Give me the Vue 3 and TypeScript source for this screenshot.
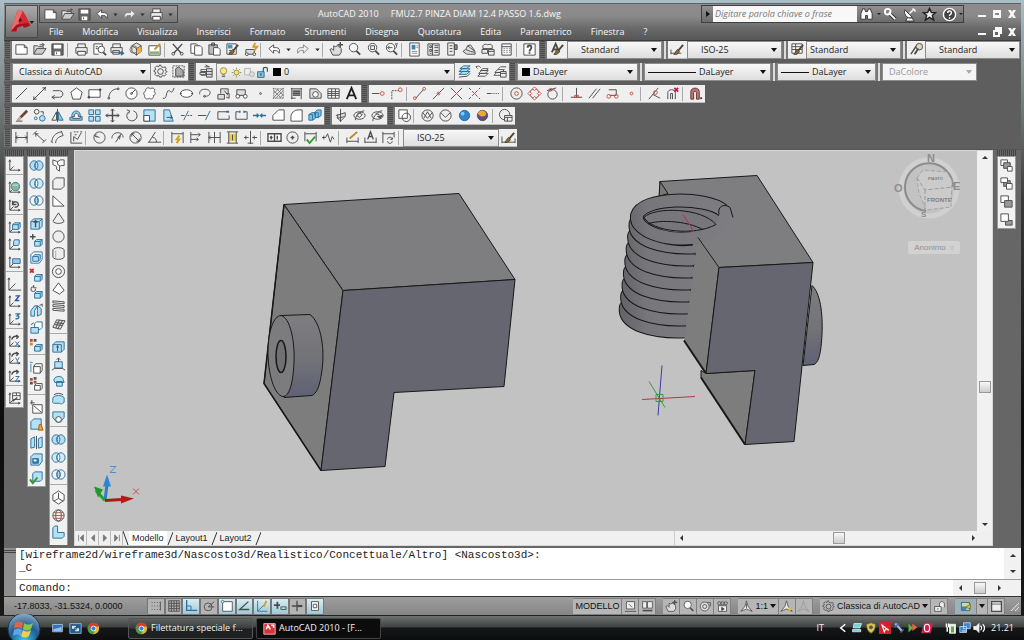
<script setup lang="ts">
import { ref } from 'vue'

type Item =
  | { kind: 'grip' }
  | { kind: 'light' }
  | { kind: 'bar'; width: number; icons: string[] }
  | {
      kind: 'combo'
      label: string
      width: number
      value: string
      pad: string
      swatch?: boolean
      line?: number
      disabled?: boolean
      layer?: boolean
    }

const B = 'stroke="#2a6f9e"'
const L = 'fill="#b5e2f2"'
const R = 'stroke="#c8503c"'
const G = 'stroke="#888"'
const axes = '<path d="M3 2v11h11M3 13l4-4M2 4l1-2 1 2M12 12l2 1-2 1"/>'
const cubeS = `<path ${B} ${L} d="M6 9l2-2h6v5l-2 2H6zM6 9h6v5M12 9l2-2"/>`
const dimH = '<path d="M2 2v12M14 2v12M2 8h12M4 6L2 8l2 2M12 6l2 2-2 2"/>'
const brush = '<path d="M14 3L9 9" stroke-width="2" stroke="#554433"/><path d="M8 8l2 2c-1 3-4 4-6 3 2-1 2-4 4-5z" fill="#8a6a34" stroke="#554433"/>'
const gear = '<path d="M8 1l1 2 2 .6L13 3l1 2-1 2 2 1-2 2 1 1-2 2-2-1-1 2H7l-1-2-2 1-2-2 1-2-2-1V7l2-1-1-2 2-2 2 1 1-2z"/><circle cx="8" cy="8" r="3"/>'
const lens = '<circle cx="7" cy="6" r="4.5" fill="#f8f8f8"/><path d="M10 9.500l4 4" stroke-width="2"/>'
const rings = (a: string, b: string) =>
  `<ellipse cx="5.500" cy="8" rx="4.500" ry="5" fill="${a}" ${B}/><ellipse cx="10.500" cy="8" rx="4.500" ry="5" fill="${a}" ${B}/><path d="M8 4c2 2 2 6 0 8-2-2-2-6 0-8z" fill="${b}" ${B}/>`

const icons: Record<string, string> = {
  nuovo: '<path fill="#fff" d="M2 3h9l3 3v7H2zM11 3v3h3"/>',
  apri: '<path fill="#ddd" d="M2 13V4h4l1 1h5v2"/><path fill="#ccc" d="M2 13l3-6h10l-4 6zM8 3h5l-2-2M13 3l-2 1"/>',
  salva: '<path fill="#666" d="M2 2h12v12H2z"/><path fill="#fff" stroke="none" d="M4 3h8v4H4zM5 10h6v4H5z"/><path d="M7 11v2"/>',
  stampa: '<path fill="#eee" d="M4 6V2h8v4M2 6h12v6h-2v-2H4v2H2z"/><path fill="#fff" d="M4 10h8v4H4z"/>',
  anteprima: '<path fill="#fff" d="M2 2h9v3M2 2v11h5M4 5h2M4 7h2"/><circle cx="10" cy="8" r="3.500" fill="#fff"/><path stroke-width="2" d="M12 11l3 3"/>',
  pubblica: `<path fill="#eee" d="M3 6V2h8v4M1 6h12v5H1zM3 9h7v4H3z"/><path d="M9 12h5M12 10l3 2-3 2z" ${B} fill="#2a7fc0"/>`,
  dwf: '<path fill="#e9e2c8" d="M3 4l5-3 5 3v6l-5 4-5-4zM3 4l5 3 5-3M8 7v7"/><circle cx="5" cy="8" r="4" fill="none" stroke="#777"/><path fill="#e6b43c" stroke="none" d="M9 7l4-2v5l-4 3z"/>',
  foglio: '<path fill="#fff" d="M2 4h12v10H2z"/><path fill="#8fb27a" stroke="none" d="M3 10h10v3H3z"/><path stroke="#c79327" stroke-width="2" d="M14 2L8 8"/>',
  taglia: '<path stroke-width="1.500" d="M3 2l9 10M13 2L4 12"/><circle cx="3.500" cy="12.500" r="1.500"/><circle cx="12.500" cy="12.500" r="1.500"/>',
  copia: '<path fill="#fff" d="M2 2h6l2 2v8H2z"/><path fill="#fff" d="M6 4h6l2 2v8H6z"/>',
  incolla: '<path fill="#bbb" d="M2 3h9v10H2zM5 1h3v3H5z"/><path fill="#fff" d="M7 6h5l2 2v6H7z"/>',
  proprieta: `<path fill="#fff" d="M2 2h10v11H2z"/><path fill="#4d93c7" stroke="none" d="M3 3h5v4H3z"/><path d="M4 9h3M4 11h3"/>${brush}`,
  blocco: '<path d="M2 8h9v5H2z" fill="#ddd"/><circle cx="3" cy="13" r="1.500" fill="#fff"/><circle cx="11" cy="13" r="1.500" fill="#fff"/><path stroke="#d99a2b" stroke-width="2" d="M12 1l-2 4h4l-3 4"/>',
  annulla: '<path fill="#fff" d="M2 7l5-4v3h3c3 0 4 3 3 6-1-2-2-3-4-3H7v3z"/>',
  ripeti: `<path fill="#eee" ${G} d="M14 7L9 3v3H6c-3 0-4 3-3 6 1-2 2-3 4-3h2v3z"/>`,
  giu: '<path fill="#333" stroke="none" d="M4 6h8l-4 5z"/>',
  pan: '<path fill="#ddd" d="M4 14L1 8l2-1 2 2V4l2 1 2-1 2 1 2 2v4l-2 3z"/><path d="M12 0v6M9 3h6" stroke-width="1.500"/>',
  zoom: lens,
  zoomf: `${lens}<path d="M5 4h4v4H5z"/>`,
  zoomp: `${lens}<path d="M12 2c2 1 2 4 0 5M12 2h3M9 6H4M6 4L4 6l2 2"/>`,
  tavola: `<path fill="#fff" d="M3 1h10v14H3z"/><path fill="#3c7fb0" stroke="none" d="M5 3h4v5H5z"/><path d="M10 4h2M10 6h2M5 10h6M5 12h6" ${G}/>`,
  centro: '<path fill="#eee" d="M2 2h12v12H2z"/><path stroke-width="1" d="M4 4h2v2H4zM9 4h4M9 6h4M4 8h2v2H4zM9 9h4M9 11h4M4 12h2M7 2v12"/>',
  tavolozze: '<path fill="#eee" d="M4 1h7v13H4z"/><path fill="#888" d="M11 3h3v5h-3zM6 4h3M6 7h3M6 10h3"/>',
  revisioni: '<path fill="#ddd" d="M1 10l3-2 5 2 5 1v2H5zM4 8l2-4 8 6M9 3l5 7M6 4l3-1"/>',
  markup: '<path fill="#eee" d="M2 4c1-2 4-2 5-1 2-1 4-1 5 1v3H2zM1 8h6v4H1zM8 8h6v6H8zM8 10h6"/>',
  calc: '<path fill="#f5f5f5" d="M3 2h10v12H3zM3 5h10"/><path d="M5 7h1M8 7h1M11 7h1M5 9h1M8 9h1M11 9h1M5 11h1M8 11h1M11 11h1"/>',
  guida: '<path fill="#fff" d="M2 2h12v12H2z"/><path stroke-width="2" d="M6 6c0-3 4-3 4-.5S8 8 8 10M8 11v1.500"/>',
  stileT: `<path stroke-width="2" d="M2 11L6 2l4 9M4 8h5"/>${brush}`,
  stileQ: `<path d="M1 8v5M1 12h11"/>${brush}`,
  stileTab: `<path fill="#fff" d="M2 2h11v10H2zM2 5h11M2 8h11M6 2v10"/>${brush}`,
  stileD: '<path d="M2 13L8 4" stroke-width="1.500"/><circle cx="11" cy="5" r="3.500" fill="#e5d7b8"/><path d="M6 13l4-6" stroke-width="2"/>',
  gear,
  area: '<path fill="#aaa" d="M5 5l3-2 5 4v6H5z"/><path stroke-dasharray="2 1" d="M2 2h12v12H2z"/>',
  layers: '<path fill="#fff" d="M2 6h6v2H2zM1 9h6v2H1zM2 12h6M6 3h5M7 1l4 2"/><path fill="#ddd" d="M8 5h6v9H8zM8 8h6M8 11h6"/>',
  lampada: '<circle cx="8" cy="6" r="4" fill="#fbe58a" stroke="#9a8446"/><path d="M6 11h4M6 13h4" stroke="#555"/>',
  sole: '<circle cx="8" cy="8" r="3" fill="#f6e27a" stroke="#8f8532"/><path stroke="#8f8532" d="M8 2v2M8 12v2M2 8h2M12 8h2M4 4l1 1M11 11l1 1M12 4l-1 1M4 12l1-1"/>',
  gela: `<path fill="#eee" stroke="#aaa" d="M2 3h7v8H2z"/><circle cx="11" cy="10" r="3" fill="#ddd" stroke="#aaa"/>`,
  aperto: `<path fill="#7fc4de" stroke="#2c5f78" d="M2 7h8v7H2z"/><path stroke="#2c5f78" stroke-width="1.500" d="M9 7V4c0-3 5-3 5 0v3M6 9v3"/>`,
  piani1: `<path ${B} ${L} d="M2 11l4-3h8l-4 3zM2 8l4-3h8l-4 3zM3 5l4-3h7l-4 3z"/><path d="M2 14l9-1 3-3"/>`,
  piani2: '<path fill="#fff" d="M3 13l3-3h8l-3 3zM4 10l3-3h7l-3 3zM6 7l2-2h6l-2 2zM6 4C5 2 3 2 1 3l2 2"/>',
  piani3: '<path fill="#fff" d="M1 12l3-3h7l-3 3zM2 9l3-3h7l-3 3zM5 6l3-3h6"/><path fill="#eee" d="M8 8h6v6H8zM8 10h6"/>',
  linea: '<path d="M2 14L14 2"/>',
  xlinea: '<path d="M1 15L15 1M11 2l3 0 0 3M2 11v3h3"/>',
  poli: '<path d="M3 5h7c5 0 5 7 0 7H2M5 10l-3 2 3 2"/>',
  poligono: '<path fill="#fff" d="M8 2l6 4.500L12 14H4L2 6.500z"/>',
  rett: '<path fill="#fff" d="M2 4h12v8H2z"/><circle cx="2" cy="12" r="1" fill="#555"/><circle cx="14" cy="4" r="1" fill="#555"/>',
  arco: '<path d="M3 13C3 7 7 3 13 3"/><circle cx="3" cy="13" r="1"/><circle cx="13" cy="3" r="1"/>',
  cerchio: '<circle cx="8" cy="8" r="6" fill="#fff"/><path d="M8 8l4-4"/><circle cx="8" cy="8" r="1"/>',
  nuvola: '<path fill="#fff" d="M4 5c-1-3 4-4 5-2 2-2 6 0 4 3 2 2 1 4-1 4 1 3-2 5-4 3-3 2-6 0-5-3-2-1-1-4 1-5z"/>',
  spline: '<path d="M2 13c5 2 3-8 6-8s3 5 6-3"/>',
  ellisse: '<ellipse cx="8" cy="8" rx="6.500" ry="4" fill="#fff"/><path d="M1 8h2M13 8h2"/>',
  arcoel: '<path d="M3 9c-2-7 11-7 11-2 0 4-5 4-6 4"/><circle cx="8" cy="11" r="1"/>',
  inserisci: '<path fill="#ddd" d="M2 9h7v5H2zM5 8V3h8v5h-2M9 5l3 4 2-1v5l-3-1"/>',
  crea: '<path fill="#ddd" d="M3 4h9v6H3z"/><circle cx="4" cy="11" r="2" fill="#fff"/><circle cx="12" cy="11" r="2" fill="#fff"/>',
  punto: '<circle cx="8" cy="8" r="1"/>',
  tratteggio: '<path stroke-dasharray="1 1" d="M2 3h12M2 13h12M3 2v12M13 2v12"/><path stroke="#777" d="M3 8l5-5M3 12l9-9M5 13l8-8M9 13l4-4M3 5l8 8M6 3l7 7"/>',
  gradiente: '<path fill="#888" stroke="none" d="M4 4h8v6H4z"/><path d="M2 3h12M3 2v12M13 2v12M2 13h5M4 6h8M4 8h8M4 10h8"/>',
  regione: '<path fill="#ddd" d="M2 13V3h7l5 5v5z"/><circle cx="8" cy="9" r="3" fill="#fff"/>',
  tabella: '<path fill="#fff" d="M2 3h12v10H2zM2 6h12M2 8h12M2 10h12M6 3v10M10 3v10"/>',
  testo: '<path stroke-width="2" stroke="#222" d="M3 14L8 2l5 12M5 10h6"/>',
  snap1: `<path d="M1 8h8"/><circle cx="12" cy="8" r="2" ${R}/>`,
  snap2: `<path stroke-dasharray="2 1" d="M3 14V5h7"/><circle cx="12" cy="4" r="2" ${R}/>`,
  snap3: `<path d="M4 13L12 4"/><circle cx="3" cy="13" r="1.500" ${R}/><circle cx="13" cy="3" r="1.500" ${R}/>`,
  snap4: `<path d="M2 14L14 2"/><circle cx="8" cy="8" r="1.500" ${R}/>`,
  snap5: `<path d="M2 2l12 12M2 14L14 2"/><path ${R} d="M6 6l4 4M6 10l4-4"/>`,
  snap6: `<path stroke-dasharray="3 2" d="M2 2l12 12M2 14L14 2"/><path ${R} d="M6 6l4 4M6 10l4-4"/>`,
  snap7: '<path d="M2 8h5M8 8h1M10 8h1M12 8h1M14 8h1"/>',
  snap8: `<circle cx="8" cy="8" r="6"/><circle cx="8" cy="8" r="2" ${R}/>`,
  snap9: `<circle cx="8" cy="8" r="5"/><path ${R} fill="#fff" d="M8 1l2 2-2 2-2-2zM8 11l2 2-2 2-2-2zM3 6l2 2-2 2-2-2zM13 6l2 2-2 2-2-2z"/>`,
  snap10: `<circle cx="8" cy="9" r="5"/><path d="M2 5l10-3"/><circle cx="6" cy="4" r="1.500" ${R}/>`,
  snap11: `<path d="M8 2v10M2 12h12"/><path ${R} d="M6 12v-2h4v2z"/>`,
  snap12: '<path d="M2 13L10 3M6 13l8-10"/>',
  snap13: `<path d="M4 4h8v6H5"/><circle cx="4" cy="11" r="2" ${R}/><circle cx="12" cy="11" r="2" ${R}/>`,
  snap14: `<circle cx="8" cy="8" r="1.500" ${R}/>`,
  snap15: `<path d="M2 14L12 2M6 9l8 4"/><circle cx="9" cy="7" r="2" ${R}/>`,
  snap16: '<path d="M3 14V7c0-4 8-4 8 0v7M6 14V8h2v6"/><path stroke="#c02040" stroke-width="2" d="M10 2l4 4M14 2l-4 4"/>',
  magnete: '<path fill="#b77" stroke="#633" d="M3 14V6c0-5 9-5 9 0v8H9V7c0-2-3-2-3 0v7z"/><path d="M13 13h2" stroke-width="2" stroke="#633"/>',
  cancella: '<path stroke-width="3" stroke="#6b4630" d="M14 3L7 10"/><path stroke-width="3" stroke="#d9a07a" d="M7 10l-3 3"/><path d="M2 14h7"/>',
  copiaO: `<circle cx="5" cy="4" r="2.500"/><circle cx="4" cy="11" r="1.500" ${B}/><circle cx="11" cy="11" r="3" ${B} ${L}/><path d="M9 4h3v3"/>`,
  specchio: `<path d="M7 4v9H2z"/><path ${B} fill="#8fcbe4" d="M9 4v9h5z"/><path d="M8 1v14"/>`,
  offset: `<path ${B} fill="#8fcbe4" d="M1 13v-3h2c-1-9 10-9 9-1h2v4z"/><path fill="#fff" d="M4 11V9h2c-1-4 4-4 4-1v1h2v2z"/>`,
  serie: `<path ${B} ${L} d="M2 2h5v5H2zM9 2h5v5H9zM2 9h5v5H2zM9 9h5v5H9z"/>`,
  sposta: '<path stroke-width="1.500" d="M8 1v14M1 8h14"/><path d="M6 3l2-2 2 2M6 13l2 2 2-2M3 6L1 8l2 2M13 6l2 2-2 2"/>',
  ruota: '<path d="M10 3a5.500 5.500 0 1 1-5 1M3 2l3 1-1 3"/>',
  scala: `<path ${B} ${L} d="M2 2h12v12H2z"/><path fill="#fff" d="M2 8h6v6H2z"/>`,
  stira: `<path ${B} ${L} d="M3 2h6l4 12H3z"/><path d="M6 10h6M10 8l2 2-2 2"/>`,
  taglia2: `<path d="M2 8h4"/><path ${B} d="M5 13L10 3"/><path stroke-dasharray="2 1" d="M9 8h6"/>`,
  estendi: `<path d="M1 8h9"/><path ${B} d="M9 13L14 3"/>`,
  spezza1: `<path d="M12 4H2v8h12V8"/><path ${B} stroke-width="2" d="M11 4h3"/>`,
  spezza2: `<path d="M5 4H2v8h12V4h-3"/><path ${B} stroke-width="2" d="M5 4h2M10 4h2"/>`,
  unisci: `<path ${B} stroke-width="1.500" d="M1 8h5M10 8h5M5 6l2 2-2 2M11 6L9 8l2 2"/>`,
  cima: '<path fill="#fff" d="M2 13V8l6-6h6v11z"/>',
  raccordo: '<path fill="#fff" d="M2 14V10c0-5 4-8 8-8h4v12z"/>',
  esplodi: `<path ${B} fill="#7fc4de" d="M2 7l3-2h4v6l-3 2H2zM8 5l3-3h4v6l-3 2H9zM2 7h4v6M8 5h4v6"/>`,
  orbita1: '<path fill="#ddd" d="M2 8l10-3M4 7v4l8-2V5"/><path d="M7 1v14M3 10l4 4 4-4"/>',
  orbita2: '<ellipse cx="8" cy="8" rx="6" ry="4"/><path d="M4 13c-2-4 6-10 9-10M7 5l4 2-3 3-3-2z"/>',
  orbita3: '<ellipse cx="8" cy="8" rx="6" ry="4"/><path fill="#555" d="M8 9l5-1-2 3z"/><path d="M3 14c0-5 6-11 10-11M6 6l4 1"/>',
  stile1: '<path fill="#fff" d="M2 2h9v9H2z"/><circle cx="10" cy="10" r="4.500" />',
  stile2: '<circle cx="8" cy="8" r="6"/><path d="M3 5l5 6 5-6M4 11l4-7 4 7"/>',
  stile3: '<circle cx="8" cy="8" r="6"/><path d="M3 5l5 5 5-5"/>',
  stile4: '<circle cx="8" cy="8" r="5.500" fill="#2f86d0" stroke="#286ca8"/><circle cx="6" cy="6" r="2" fill="#8cc8f2" stroke="none"/>',
  stile5: '<circle cx="8" cy="8" r="5.500" fill="#5b4a92" stroke="#64533d"/><path fill="#e9a63a" stroke="none" d="M3 6c2-5 9-4 9 1-2 3-6 3-9-1z"/>',
  stile6: '<circle cx="7" cy="7" r="5.500"/><path fill="#eee" d="M7 8h8v6H7zM7 10h8M10 10v4"/>',
  quota1: dimH,
  quota2: '<path d="M3 3l10 9M1 5l4-4M11 14l4-4M4 4v3M4 4h3"/>',
  quota3: '<path d="M2 13C2 7 6 3 12 2M6 14c0-4 3-7 8-8M1 12l2 2M12 1l2 5"/>',
  quota4: '<path d="M2 2v12h12M5 12V7l4 3 4-7M5 2h2M8 2h2M12 2h2M6 5h2"/>',
  quota5: '<circle cx="8" cy="8" r="6"/><path d="M3 6l5 2M5 4L3 6l2 2"/>',
  quota6: '<path d="M2 9c0-8 12-8 12-1M12 4l-6 9M10 10l1-4-3 2"/>',
  quota7: '<circle cx="8" cy="8" r="6"/><path d="M4 4l8 8M4 7V4h3M12 9v3H9"/>',
  quota8: '<path d="M1 13h14M2 13L9 2M6 8c3 0 4 2 4 5"/>',
  quota9: '<path d="M2 2v12M14 2v12M2 4h12"/><path stroke="#d5a21c" stroke-width="2" d="M10 6l-3 4h3l-3 4"/>',
  quota10: '<path d="M3 2v12M3 5h10M3 10h8M11 3l2 2-2 2M9 8l2 2-2 2"/>',
  quota11: '<path d="M2 2v12M8 2v12M14 2v12M2 8h12M4 6L2 8l2 2"/>',
  quota12: '<path fill="#e8d048" stroke="none" d="M4 4h8v8H4z"/><path d="M2 2h12M2 14h12M4 2v12M12 2v12M8 5v6"/>',
  quota13: '<path d="M1 8h5M10 8h5M8 1v14M3 6v4M12 6v4M5 14h6"/>',
  quota14: '<path fill="#fff" d="M1 4h14v8H1zM8 4v8M3 8h3M4.500 6v4M11 6v4" stroke-width="1.500"/>',
  quota15: '<circle cx="8" cy="8" r="6"/><path stroke-width="1.500" d="M8 6v4M6 8h4"/>',
  quota16: '<path d="M2 2v10M14 2v10M2 4h12"/><path stroke="#3c9a34" stroke-width="2" d="M4 10l3 4 6-7"/>',
  quota17: '<path d="M1 8h4l2-4 3 9 2-6 2 3M3 6v4"/>',
  quota18: '<path d="M2 8v6M14 8v6M2 12h12"/><path stroke="#b98b28" stroke-width="2" d="M13 2L5 9"/>',
  quota19: '<path d="M2 8v6M14 8v6M2 13h12"/><path stroke-width="1.500" d="M5 10l3-8 3 8M6 7h4"/>',
  quota20: '<path d="M2 2v12M14 2v6M2 4h12M7 10c0-3 5-3 5 0M12 12c0 3-5 3-5 0M12 8v2h-2"/>',
  stileQ2: `<path d="M1 7v7M15 9v5M1 13h14"/>${brush}`,
  ucs: axes,
  ucsMondo: `${axes}<circle cx="9" cy="7" r="4.500" fill="#7fb8a8" stroke="#4f7f78"/><path stroke="#d8eee8" d="M6 6c2-2 4 1 6-1"/>`,
  ucsPrec: `${axes}<path stroke-width="1.500" d="M6 3v4h4M6 7c1-5 7-3 6 1-1 2-2 2-4 2"/>`,
  ucsFaccia: `${axes}<path ${B} ${L} d="M6 5l2-2h6v5l-2 2H6zM6 5h6v5M12 5l2-2"/>`,
  ucsOgg: `${axes}<path ${B} ${L} d="M7 5l1-2h5v4l-1 2H7z"/>`,
  ucsVista: `${axes}<path ${B} fill="#9ccbe8" d="M6 4h8v5H6z"/>`,
  ucsO: '<path d="M2 1v13h13M2 14l7-7M1 3l1-2 1 2"/>',
  ucsZ: `${axes}<path stroke="#3450b0" stroke-width="1.500" d="M9 2h4l-4 5h4"/>`,
  ucs3: `${axes}<path stroke="#3070a0" stroke-width="1.500" d="M9 2h4l-2 2c3 0 2 4-2 3"/>`,
  ucsRx: `${axes}<path stroke-width="1.500" d="M5 6c1-4 4-4 7-3M10 1l2 2-2 2"/><path ${B} d="M9 8l4 5M13 8l-4 5"/>`,
  ucsRy: `${axes}<path stroke-width="1.500" d="M5 6c1-4 4-4 7-3M10 1l2 2-2 2"/><path ${B} d="M9 7l2 3 2-3M11 10v3"/>`,
  ucsRz: `${axes}<path stroke-width="1.500" d="M5 6c1-4 4-4 7-3M10 1l2 2-2 2"/><path ${B} d="M9 8h4l-4 5h4"/>`,
  ucsApp: `${axes}<path fill="#fff" d="M6 2h8v7H6zM6 5h8M10 2v3"/><path stroke-width="1.500" d="M6 11l5-4"/>`,
  unione: rings('#b5dcf2', '#b5dcf2'),
  interseca: rings('none', '#b5dcf2'),
  sotU: rings('#d0ebf5', '#fff'),
  estrudi: `<path ${B} ${L} d="M2 6l3-3h9v8l-3 3H2zM2 6h9v8M11 6l3-3"/><path stroke-width="1.500" d="M7 12V5M5 7l2-2 2 2"/>`,
  spostaF: `${cubeS}<path stroke-width="1.500" d="M4 1v6M1 4h6"/>`,
  offsetF: `<path ${B} fill="#fff" d="M2 5l3-3h9v8l-3 4H2z"/><path ${B} ${L} d="M4 7h6v5H4zM4 7l2-2h6v5l-2 2"/>`,
  eliminaF: `${cubeS}<path stroke="#c03030" stroke-width="2" d="M1 1l4 4M5 1L1 5"/>`,
  ruotaF: `${cubeS}<path d="M5 2a2.500 2.500 0 1 0 2 2M5 0v3h3"/>`,
  rastrema: `<path ${B} ${L} d="M2 14V8l4-5h3l-3 5v6zM9 3l4 3v6l-4 2V8z"/><path d="M11 3l3-2v3"/>`,
  copiaF: `<path ${B} fill="#fff" d="M6 4l2-2h6v6l-2 2H6z"/><path ${B} ${L} d="M2 8h8v6H2z"/><path d="M2 5l3-2"/>`,
  coloraF: `${cubeS}<path stroke="none" fill="#a85238" d="M1 1h3v3H1z"/><path stroke="none" fill="#555" d="M5 1h3v3H5z"/><path stroke="none" fill="#c88a3c" d="M1 5h3v3H1z"/>`,
  copiaS: '<path fill="#fff" d="M5 7l2-3h7v7l-2 3H5zM5 7h7v7"/><path d="M2 4v9M1 2l3 1" stroke="#3c88b5"/>',
  coloraS: '<path fill="#fff" d="M6 9l2-2h6v5l-2 2H6zM6 9h6v5"/><path stroke="none" fill="#a85238" d="M1 1h3v3H1zM5 4h3v3H5z"/><path stroke="none" fill="#555" d="M5 0h3v3H5zM1 5h3v3H1z"/>',
  imprimi: '<path fill="#fff" d="M4 5h10v9H4z"/><path d="M5 6l8 7M3 0v5M1 3h5"/>',
  pulisci: `<path ${B} ${L} d="M2 5l3-3h8v8l-2 3H2z"/><path fill="#f0a030" stroke="#9a6418" d="M10 14l1-6h2l2 6z"/>`,
  separa: `<path ${B} ${L} d="M2 4l4-2v11l-4 1zM10 4l4-2v11l-4 1z"/><path d="M8 1v14" />`,
  svuota: `<path ${B} ${L} d="M2 5l3-3h9v8l-3 4H2z"/><path ${B} fill="#3a7ca5" d="M4 7h6v5H4z"/><path fill="#fff" stroke="none" d="M5 8h3v2H5z"/>`,
  controlla: `<path ${B} ${L} d="M4 4l2-2h8v8l-2 2H4z"/><path stroke="#3c9030" stroke-width="2" d="M1 10l3 4 5-6"/>`,
  polisol: '<path fill="#fff" d="M2 2l5 2v3l2 1v6l-3-2V9L2 7zM7 4l3-2h4v6h-3l-2 1"/>',
  cubo: '<path fill="#eee" d="M2 5l3-3h9v9l-3 3H2z"/>',
  cuneo: '<path fill="#fff" d="M2 14V3l12 11z"/>',
  cono: '<path fill="#eee" d="M8 2l6 9c-2 3-10 3-12 0z"/>',
  sfera: '<circle cx="8" cy="8" r="6" fill="#eee"/>',
  cilindro: '<path fill="#eee" d="M2 4c2-3 10-3 12 0v8c-2 3-10 3-12 0z"/><path d="M5 5v8" stroke="#aaa"/>',
  toro: '<circle cx="8" cy="8" r="6.500"/><circle cx="8" cy="8" r="3" fill="#fff"/>',
  piramide: '<path fill="#fff" d="M8 2l6 8-5 4-7-4z"/>',
  elica: '<path fill="#fff" d="M2 2l12 1v2L2 4zM2 6l12 1v2L2 8zM2 10l12 1v2L2 12z"/>',
  superf: '<path fill="#ddd" d="M6 3l9 1-5 9-8-2zM5 6l8 1M4 8l8 1M9 3l-4 9M12 4l-5 9"/>',
  estr2: `<path ${B} ${L} d="M2 6l3-3h9v8l-3 3H2zM2 6h9v8"/><path d="M7 13V7M6 9l1-2 1 2"/>`,
  premi: `<path ${B} ${L} d="M4 5h8v7H4z"/><path d="M8 1v4M6 3l2-2 2 2M1 14l3-2M15 14l-3-2M4 12h8"/>`,
  sweep: `<path ${B} ${L} d="M3 6c2-5 10-4 10 0l1 3H4zM6 8h6v5H6z"/>`,
  rivol: `<path ${B} ${L} d="M2 6c3-3 9-3 12 0v5c-2 2-4 2-5 1H4c-2 0-3-1-2-3z"/><path d="M3 3c3-2 7-2 10 0"/>`,
  loft: `<path ${B} ${L} d="M2 2h12v6l-4 5H6L2 8z"/><circle cx="8" cy="10" r="3" fill="#fff"/>`,
  ucs3d: '<path fill="#fff" d="M8 1l6 4v6l-6 4-6-4V5zM8 3v6M8 9l5 3M8 9l-5 3"/>',
  globo: '<circle cx="8" cy="8" r="6"/><ellipse cx="8" cy="8" rx="3" ry="6"/><path d="M2 8h12M3 5h10M3 11h10" stroke="#a06050"/>',
  piano: `<path ${B} ${L} d="M2 3l2-2h3v7h7v4l-2 2H2z"/>`,
  ord1: '<path fill="#fff" d="M2 2h7v6H2z"/><path fill="#999" d="M5 5h7v6H5z"/><path fill="#fff" d="M9 9h5v5H9z"/>',
  ord2: '<path fill="#999" d="M5 5h7v6H5z"/><path fill="#fff" d="M2 2h7v5H2zM8 8h6v6H8z"/>',
  ord3: '<path fill="#fff" d="M2 2h8v7H2z"/><path fill="#999" d="M6 7h8v7H6z"/>',
  ord4: '<path fill="#999" d="M7 9h7v5H7z"/><path fill="#fff" d="M2 2h8v8H2z"/>',
  griglia1: '<path stroke-dasharray="1 2" d="M3 4h10M3 8h10M3 12h10"/><path d="M13 3v10"/>',
  griglia2: '<path d="M2 2h12v12H2zM5 2v12M8 2v12M11 2v12M2 5h12M2 8h12M2 11h12"/>',
  orto: `<path ${B} stroke-width="1.500" d="M3 1v12h12"/><path ${B} d="M3 8h5v5"/>`,
  polare: '<circle cx="7" cy="9" r="4.500"/><path d="M7 9h7M7 9l7-6"/>',
  osnap: `<path fill="#fff" d="M3 3h11v11H3z"/><circle cx="3" cy="3" r="1.500" fill="#fff" ${B}/>`,
  otrack: '<path stroke-width="1.500" d="M13 3L3 12h11"/>',
  ducs: `<path ${B} d="M3 2v12h11M3 14L13 4"/><path stroke="#d5a21c" stroke-width="2" d="M13 2l-3 7"/>`,
  dyn: '<path stroke-width="2" d="M1 7h7M5 3v8"/><path d="M9 9h6v3H9z"/>',
  lwt: '<path stroke-width="1.500" d="M8 2v12M2 8h12"/><path stroke-width="2.500" d="M8 8h6"/>',
  qp: '<path fill="#fff" d="M4 3h8v10H4z"/><path d="M6 6h4v4H6z"/>',
  lay1: '<path fill="#eee" d="M3 2h10v9H3zM1 14h14M6 5l4 4"/>',
  lay2: '<path fill="#eee" d="M2 2h5v8H2zM8 2h6v8H8z"/><path stroke-width="2" d="M2 13h12"/>',
  ruotino: '<circle cx="7" cy="8" r="5.500" fill="#ddd"/><circle cx="7" cy="8" r="2.500"/><path d="M10 3h4v5"/>',
  film: '<path fill="#eee" d="M3 7h10v7H3z"/><circle cx="4" cy="4" r="2"/><circle cx="8" cy="4" r="2"/><circle cx="12" cy="4" r="2"/><path fill="#333" d="M7 9l3 2-3 2z"/>',
  annot: '<path fill="#eee" d="M8 1l2 7 5 6-7-3-7 3 5-6zM8 4v6"/>',
  annotG: '<path fill="#eee" d="M8 1l2 7 5 6-7-3-7 3 5-6z"/><path stroke="#e0c030" stroke-width="3" d="M12 9v4"/>',
  annotD: '<path stroke="#999" d="M8 1l2 7 5 6-7-3-7 3 5-6z"/>',
  lucchetto: '<path fill="#eee" d="M2 8h8v6H2zM8 8V5c0-4 6-4 6 0v4M6 10v2"/>',
  hw: '<path fill="#bfe0a8" d="M3 3h10v10H3z"/><path fill="#3c7fc0" stroke="none" d="M3 8h6v5H3z"/><path fill="#e0c040" stroke="#7a6a20" d="M8 9l6-4v6z"/>',
  pulito: '<path fill="#eee" stroke-width="1.500" d="M2 2h12v12H2z"/><path d="M2 5h12"/>',
  binocolo: '<path fill="#fff" stroke="#333" d="M2 13V7l2-5h2l1 3h2l1-3h2l2 5v6H9V9H7v4z"/>',
  chiave: '<path stroke="#333" stroke-width="4" d="M7 7l6 6"/><path stroke="#fff" stroke-width="2" d="M6 6l7 7"/><circle cx="5" cy="5" r="3" stroke="#fff" stroke-width="2"/>',
  antenna: '<path fill="#fff" stroke="#333" d="M3 3l8 8c-3 3-10-2-8-8zM6 11l-2 4h9l-3-4"/><path stroke="#fff" stroke-width="1.500" d="M8 7l4-4M11 2c2 0 3 1 3 3"/>',
  stella: '<path fill="#eee" stroke="#222" stroke-width="1.500" d="M8 1.500l2 4.500h4.500L11 9l1.500 5L8 11l-4.500 3L5 9 1.500 6H6z"/>',
  aiuto: '<circle cx="8" cy="8" r="6.500" fill="#444" stroke="#fff" stroke-width="1.500"/><path stroke="#fff" stroke-width="1.500" d="M6 6.500c0-3 4-3 4-.5S8 7.500 8 9.500M8 11v1.500"/>',
  desktop: '<path fill="#2d74c4" stroke="#bcd" d="M2 3h12v9H2z"/><path fill="#8fc0ee" stroke="none" d="M3 9l10-3v5H3z"/>',
  finestre: '<path fill="#235a94" stroke="#9cc" d="M1 2h14v12H1z"/><path fill="#cfe6f8" stroke="#246" d="M3 4h6v5H3zM7 7h6v5H7z"/>',
  chrome: '<circle cx="8" cy="8" r="7" fill="#e0b52c" stroke="none"/><path fill="#cf3b2c" stroke="none" d="M2 4a7 7 0 0 1 12.500 1.500H8L5 10z"/><path fill="#3f9b48" stroke="none" d="M2 4a7 7 0 0 0 5.500 11L10 10H6z"/><circle cx="8" cy="8" r="3" fill="#3b7de0" stroke="#fff"/>',
  acad: '<path fill="#d8323a" stroke="#f4d0d0" d="M1 2h14v13H1z"/><path stroke="#fff" stroke-width="2" d="M4 9l2-5 3 5M10 4h3v3"/>',
  t1: '<path fill="#7fd0d8" stroke="#def" d="M4 2h10l-2 6H3zM2 10h11v3H2z"/>',
  t2: '<path fill="#d8c25a" stroke="#6a6020" d="M2 3l6-2 6 2c0 6-2 10-6 12C4 13 2 9 2 3z"/><circle cx="8" cy="7" r="2" fill="#555"/>',
  t3: '<path fill="#d4222c" stroke="none" d="M0 0h16v16H0z"/><path stroke="#fff" stroke-width="1.500" d="M4 4l3 9 2-4 4 2z"/>',
  t4: '<path stroke="#9fb6d8" stroke-width="3" d="M3 2l9 10"/><path stroke="#4b6fa8" stroke-width="2" d="M2 7l6-5M10 14l4-4"/>',
  t5: '<path fill="#5fb04a" stroke="none" d="M2 2l6 6-6 6z"/><path fill="#e06a38" stroke="none" d="M7 2l7 5-7 5z"/>',
  t6: '<path fill="#d0224c" stroke="none" d="M4 1h12l-3 14H0z"/><ellipse cx="8" cy="8" rx="3.500" ry="5" stroke="#fff" stroke-width="1.500"/>',
  t7: '<path fill="#e8f0e4" stroke="#fff" d="M6 3h8v12H6z"/><path fill="#5fa84c" stroke="none" d="M8 6h4v8H8z"/><path stroke="#fff" stroke-width="2" d="M2 2v5M5 2v5M3 7v6"/>',
  t8: '<path fill="#3d86cc" stroke="#cfe6ff" d="M6 1h9v8H6zM1 6h9v8H1z"/><path stroke="#fff" d="M4 12h6"/>',
  t9: '<path fill="#eee" stroke="#fff" d="M1 6h3l4-4v12l-4-4H1z"/><path stroke="#fff" stroke-width="1.500" d="M10 5c2 2 2 4 0 6M13 3c3 3 3 7 0 10"/>',
}

const bar = (width: number, list: string): Item => ({ kind: 'bar', width, icons: list.split(' ') })
const grip: Item = { kind: 'grip' }
const light: Item = { kind: 'light' }

const rows: Item[][] = [
  [
    grip,
    bar(527, 'nuovo apri salva | stampa anteprima pubblica dwf foglio | taglia copia incolla proprieta blocco | annulla giu ripeti giu | pan zoom zoomf zoomp | tavola centro tavolozze revisioni markup calc | guida'),
    grip,
    bar(20, 'stileT'),
    { kind: 'combo', label: 'Stile di testo', width: 95, value: 'Standard', pad: 'mid' },
    light,
    bar(19, 'stileQ'),
    { kind: 'combo', label: 'Stile di quota', width: 95, value: 'ISO-25', pad: 'mid' },
    light,
    bar(18, 'stileTab'),
    { kind: 'combo', label: 'Stile di tabella', width: 95, value: 'Standard', pad: 'none' },
    light,
    bar(18, 'stileD'),
    { kind: 'combo', label: 'Stile multidirettrice', width: 95, value: 'Standard', pad: 'mid' },
  ],
  [
    grip,
    { kind: 'combo', label: 'Area di lavoro', width: 139, value: 'Classica di AutoCAD', pad: 'small' },
    bar(37, 'gear area'),
    grip,
    bar(20, 'layers'),
    { kind: 'combo', label: 'Layer', width: 239, value: '0', pad: 'none', swatch: true, layer: true },
    bar(54, 'piani1 piani2 piani3'),
    grip,
    { kind: 'combo', label: 'Colore', width: 121, value: 'DaLayer', pad: 'none', swatch: true },
    light,
    { kind: 'combo', label: 'Tipo di linea', width: 127, value: 'DaLayer', pad: 'none', line: 48 },
    light,
    { kind: 'combo', label: 'Spessore di linea', width: 99, value: 'DaLayer', pad: 'none', line: 28 },
    light,
    { kind: 'combo', label: 'Stile di stampa', width: 95, value: 'DaColore', pad: 'small', disabled: true },
  ],
  [
    grip,
    bar(349, 'linea xlinea poli poligono rett arco cerchio nuvola spline ellisse arcoel inserisci crea punto tratteggio gradiente regione tabella testo'),
    grip,
    bar(336, 'snap1 snap2 | snap3 snap4 snap5 snap6 snap7 | snap8 snap9 snap10 | snap11 snap12 snap13 snap14 | snap15 snap16 | magnete'),
  ],
  [
    grip,
    bar(312, 'cancella copiaO specchio offset serie sposta ruota scala stira taglia2 estendi spezza1 spezza2 unisci cima raccordo esplodi'),
    grip,
    bar(55, 'orbita1 orbita2 orbita3'),
    grip,
    bar(120, 'stile1 | stile2 stile3 stile4 stile5 | stile6'),
  ],
  [
    grip,
    bar(391, 'quota1 quota2 quota3 quota4 | quota5 quota6 quota7 quota8 | quota9 quota10 quota11 quota12 quota13 | quota14 quota15 quota16 quota17 | quota18 quota19 quota20 |'),
    { kind: 'combo', label: 'Stile di quota corrente', width: 96, value: 'ISO-25', pad: 'mid' },
    bar(18, 'stileQ2'),
  ],
]

const palettes: { id: string; icons: string[] }[] = [
  { id: 'ucs-bar', icons: 'ucs | ucsMondo ucsPrec | ucsFaccia ucsOgg ucsVista | ucsO ucsZ ucs3 | ucsRx ucsRy ucsRz | ucsApp'.split(' ') },
  { id: 'solid-bar', icons: 'unione sotU interseca | estrudi spostaF offsetF eliminaF ruotaF rastrema copiaF coloraF | copiaS coloraS | imprimi pulisci separa svuota controlla'.split(' ') },
  { id: 'model-bar', icons: 'polisol cubo cuneo cono sfera cilindro toro piramide elica superf | estr2 premi sweep rivol loft | unione sotU interseca | ucs3d globo piano interseca'.split(' ') },
]

const menus = ['File', 'Modifica', 'Visualizza', 'Inserisci', 'Formato', 'Strumenti', 'Disegna', 'Quotatura', 'Edita', 'Parametrico', 'Finestra', '?']
const quick = ['nuovo', 'apri', 'salva', 'annulla', 'giu', 'ripeti', 'giu', 'stampa', 'giu']
const toggles: [string, boolean][] = [
  ['griglia1', false], ['griglia2', false], ['orto', true], ['polare', false], ['osnap', true],
  ['otrack', true], ['ducs', true], ['dyn', true], ['lwt', false], ['qp', true],
]
const tray = ['t1', 't2', 't3', 't4', 't5', 't6']
const tray2 = ['t7', 't8', 't9']

// Windings of the spring below the top ring, listed from the lowest to the highest.
const coils = Array.from({ length: 8 }, (_, k) => {
  const i = 8 - k
  const cx = 680 - i * 1.4
  const cy = 219 + i * 12
  return `M${cx - 43} ${cy - 8}C${cx - 45} ${cy + 9} ${cx - 16} ${cy + 17} ${cx + 14} ${cy + 16}`
})
const ring = 'M723 210C706 196 642 196 637 215 634 232 674 244 704 235 719 231 727 222 726 212'

const search = ref('')
const command = ref('')
</script>

<template>
  <div class="desktop">
    <div class="window">
      <header class="titlebar">
        <button class="logo" aria-label="Menu applicazione">
          <svg viewBox="0 0 32 32">
            <path d="M4 26L11 4h6l8 15-6 3-2-4-6 3-1 5z" fill="#d42a34" />
            <path d="M11 4h6l-3 7-4 15-6 0z" fill="#ee6a70" />
            <path d="M4 26l6-7 12-2 3 3-7 2-1-2-6 2-1 4z" fill="#a8101c" />
            <path d="M12 16l2-5 2 4z" fill="#5d1016" />
            <path d="M24 15h5l-2.500 3z" fill="#222" />
          </svg>
        </button>
        <div class="titlemain">
          <div class="titleline">
            <div class="quick">
              <button v-for="(q, i) in quick" :key="i" :class="{ drop: q === 'giu' }" :aria-label="q">
                <svg viewBox="0 0 16 16" v-html="icons[q]" />
              </button>
            </div>
            <h1><span>AutoCAD 2010</span><span>FMU2.7 PINZA DIAM 12.4 PASSO 1.6.dwg</span></h1>
            <div class="searchbox">
              <span class="tri" />
              <input v-model="search" type="text" aria-label="Cerca" placeholder="Digitare parola chiave o frase" />
              <button aria-label="Cerca"><svg viewBox="0 0 16 16" v-html="icons.binocolo" /></button>
              <span class="tiny" />
              <button aria-label="Subscription"><svg viewBox="0 0 16 16" v-html="icons.chiave" /></button>
              <button aria-label="Comunicazioni"><svg viewBox="0 0 16 16" v-html="icons.antenna" /></button>
              <button aria-label="Preferiti"><svg viewBox="0 0 16 16" v-html="icons.stella" /></button>
              <button aria-label="Aiuto"><svg viewBox="0 0 16 16" v-html="icons.aiuto" /></button>
              <span class="tiny" />
            </div>
            <div class="winbtns">
              <button aria-label="Riduci"><svg viewBox="0 0 10 10"><path d="M1 6h8v2H1z" /></svg></button>
              <button aria-label="Ingrandisci"><svg viewBox="0 0 10 10"><path fill-rule="evenodd" d="M1 1h8v8H1zM3 4h4v2H3z" /></svg></button>
              <button aria-label="Chiudi"><svg viewBox="0 0 10 10"><path d="M1 1h3l1 2 1-2h3L6.500 5 9 9H6L5 7 4 9H1l2.500-4z" /></svg></button>
            </div>
          </div>
          <div class="menuline">
            <nav>
              <button v-for="m in menus" :key="m">{{ m }}</button>
            </nav>
            <div class="winbtns">
              <button aria-label="Riduci disegno"><svg viewBox="0 0 10 10"><path d="M1 6h8v2H1z" /></svg></button>
              <button aria-label="Ripristina disegno"><svg viewBox="0 0 10 10"><path fill-rule="evenodd" d="M3 0h7v7H8v3H1V3h2zM3 5h3v3H3z" /></svg></button>
              <button aria-label="Chiudi disegno"><svg viewBox="0 0 10 10"><path d="M1 1h3l1 2 1-2h3L6.500 5 9 9H6L5 7 4 9H1l2.500-4z" /></svg></button>
            </div>
          </div>
        </div>
      </header>

      <section class="toolbars">
        <div v-for="(row, r) in rows" :key="r" class="toolrow">
          <template v-for="(it, i) in row" :key="i">
            <span v-if="it.kind === 'grip'" class="grip" />
            <span v-else-if="it.kind === 'light'" class="light" />
            <div v-else-if="it.kind === 'bar'" class="bar" :style="{ width: it.width + 'px' }">
              <template v-for="(ic, j) in it.icons" :key="j">
                <span v-if="ic === '|'" class="sep" />
                <button v-else :class="['tool', { drop: ic === 'giu' }]" :aria-label="ic">
                  <svg viewBox="0 0 16 16" v-html="icons[ic]" />
                </button>
              </template>
            </div>
            <div v-else :class="['combo', it.pad, { disabled: it.disabled }]" :style="{ width: it.width + 'px' }">
              <template v-if="it.layer">
                <svg v-for="n in ['lampada', 'sole', 'gela', 'aperto']" :key="n" class="layericon" viewBox="0 0 16 16" v-html="icons[n]" />
              </template>
              <span v-if="it.swatch" class="swatch" />
              <span v-if="it.line" class="line" :style="{ width: it.line + 'px' }" />
              <select :aria-label="it.label" :disabled="it.disabled">
                <option>{{ it.value }}</option>
              </select>
            </div>
          </template>
        </div>
      </section>

      <main class="workspace">
        <aside class="docks">
          <div v-for="p in palettes" :key="p.id" :class="['palette', p.id]">
            <span class="phead" />
            <div class="pbody">
              <template v-for="(ic, j) in p.icons" :key="j">
                <span v-if="ic === '|'" class="hsep" />
                <button v-else class="ptool" :aria-label="ic">
                  <svg viewBox="0 0 16 16" v-html="icons[ic]" />
                </button>
              </template>
            </div>
          </div>
        </aside>

        <section class="drawing">
          <div class="canvasrow">
            <div class="canvas">
              <svg class="scene" viewBox="75 151 902 379" role="img" aria-label="Modello 3D">
                <defs>
                  <linearGradient id="tube" gradientUnits="userSpaceOnUse" x1="618" y1="0" x2="735" y2="0">
                    <stop offset="0" stop-color="#616166" />
                    <stop offset="0.250" stop-color="#77777b" />
                    <stop offset="1" stop-color="#7e7e82" />
                  </linearGradient>
                  <linearGradient id="side" x1="0" y1="0" x2="0" y2="1">
                    <stop offset="0" stop-color="#7e7e82" />
                    <stop offset="0.500" stop-color="#747478" />
                    <stop offset="1" stop-color="#5f6074" />
                  </linearGradient>
                </defs>
                <g stroke="#181818" stroke-linejoin="round">
                  <path d="M284 204L459 193 515 279 343 290z" fill="#7e7e81" />
                  <path d="M284 204L343 290 321 470 264 383z" fill="#7d7d7d" />
                  <path d="M343 290L515 279 504 386 394 392 385 466 321 470z" fill="#656670" />
                  <path d="M284 204L264 383 321 470" fill="none" stroke-width="1.500" />
                  <path d="M281 315L310 314C321 322 326 350 321 376 319 388 316 393 312 395L284 397z" fill="url(#side)" />
                  <path d="M281 315C290 317 295 340 294 362 293 384 289 396 283 396 274 395 268 372 268 352 268 330 274 315 281 315z" fill="#7c7c7e" />
                  <ellipse cx="281" cy="356" rx="5" ry="16" fill="#707074" stroke-width="1.500" />
                </g>
                <g stroke-linejoin="round">
                  <path d="M660 181L757 175 813 262 719 267 690 225 660 196z" fill="#7e7e81" />
                  <path d="M660 196V181L757 175 813 262 719 267" fill="none" stroke="#181818" />
                  <path d="M660 181L668 193 659 196z" fill="#777" stroke="#181818" />
                  <g v-for="(c, i) in coils" :key="i" fill="none">
                    <path :d="c" stroke="#181818" stroke-width="14" stroke-linecap="round" />
                    <path :d="c" stroke="url(#tube)" stroke-width="12" stroke-linecap="round" />
                  </g>
                  <path d="M812 285C820 292 823 312 822 334 821 352 819 362 814 364L803 365z" fill="url(#side)" stroke="#181818" />
                  <ellipse cx="681" cy="220" rx="40" ry="15" fill="#77777b" />
                  <path d="M646 224C660 218 692 221 706 231" fill="none" stroke="#181818" />
                  <path d="M723 210C706 196 642 196 637 215 634 232 672 241 692 238" fill="none" stroke="#181818" stroke-width="14" />
                  <path :d="ring" fill="none" stroke="url(#tube)" stroke-width="12" stroke-linecap="round" />
                  <path d="M644 217C654 206 702 207 716 224M644 217C652 231 694 236 716 224" fill="none" stroke="#181818" />
                  <path d="M719 214C717 205 725 203 730 207L733 217" fill="none" stroke="#181818" />
                  <path d="M683 214L694 231" stroke="#c8283c" />
                  <path d="M698 237L719 267 706 373 684 340z" fill="#7d7d7d" />
                  <path d="M698 237L719 267 706 373" fill="none" stroke="#181818" />
                  <path d="M684 340L706 373" stroke="#181818" stroke-width="2" />
                  <path d="M701 370L706 373 755 370 745 444 701 377z" fill="#7d7d7d" stroke="#181818" />
                  <path d="M719 267L813 262 794 441 745 444 755 370 706 373z" fill="#656670" stroke="#181818" />
                  <path d="M701 377L745 444" stroke="#181818" stroke-width="2" />
                </g>
                <g fill="none">
                  <path d="M642 399L695 396" stroke="#b03a44" />
                  <path d="M662 365L658 415" stroke="#3c3ca8" />
                  <path d="M649 381L665 407M656 394h7v7h-7z" stroke="#3a9a3a" />
                </g>
                <g>
                  <path d="M105 500L107 484" stroke="#2a7fc8" stroke-width="3" />
                  <path d="M107 474L111 486 103 486z" fill="#2a86d4" />
                  <path d="M105 500L96 490" stroke="#2ca02c" stroke-width="3" />
                  <path d="M94 486L103 489 98 497z" fill="#1f9a28" />
                  <path d="M105 500L122 499" stroke="#b01818" stroke-width="3" />
                  <path d="M134 498L121 495 121 503z" fill="#b81818" />
                  <path d="M110 466h6l-6 6h6" stroke="#4a90d0" fill="none" />
                  <path d="M133 488l6 6M139 488l-6 6" stroke="#c85058" fill="none" />
                </g>
              </svg>
              <div class="compass">
                <svg viewBox="0 0 72 70" role="img" aria-label="ViewCube">
                  <circle cx="35" cy="35" r="28" fill="none" stroke="#d0d0d0" stroke-width="5" />
                  <path d="M32 58A24 24 0 1 1 59 34" fill="none" stroke="#8c8c8c" stroke-width="2" />
                  <path d="M23 25l6-8 24 2 5 9-1 26-25 3-7-17z" fill="#cbcbcb" stroke="#a4a4a4" stroke-dasharray="4 2" />
                  <path d="M23 25l8 12 27-3M31 37v20" fill="none" stroke="#999" stroke-dasharray="4 2" />
                  <text x="33" y="9" class="dir">N</text>
                  <text x="59" y="37" class="dir">E</text>
                  <text x="0" y="39" class="dir">O</text>
                  <text x="27" y="64" class="dir small">S</text>
                  <text x="34" y="27" class="face tiny-face">PIASTO</text>
                  <text x="33" y="49" class="face">FRONTE</text>
                </svg>
                <button>Anonimo <span>▽</span></button>
              </div>
            </div>
            <div class="vscroll"><span class="up" /><span class="thumb" /><span class="down" /></div>
          </div>
          <div class="tabs">
            <div class="tabnav">
              <button aria-label="Prima scheda"><svg viewBox="0 0 10 10"><path d="M2 1v8M8 1L4 5l4 4z" /></svg></button>
              <button aria-label="Scheda precedente"><svg viewBox="0 0 10 10"><path d="M7 1L3 5l4 4z" /></svg></button>
              <button aria-label="Scheda successiva"><svg viewBox="0 0 10 10"><path d="M3 1l4 4-4 4z" /></svg></button>
              <button aria-label="Ultima scheda"><svg viewBox="0 0 10 10"><path d="M8 1v8M2 1l4 4-4 4z" /></svg></button>
            </div>
            <svg class="slash" viewBox="0 0 6 14"><path d="M0 0l5 14" /></svg>
            <button class="tab active">Modello</button>
            <svg class="slash" viewBox="0 0 6 14"><path d="M6 1L1 14" /></svg>
            <button class="tab">Layout1</button>
            <svg class="slash" viewBox="0 0 6 14"><path d="M6 1L1 14" /></svg>
            <button class="tab">Layout2</button>
            <svg class="slash" viewBox="0 0 6 14"><path d="M6 1L1 14" /></svg>
            <div class="hscroll"><span class="left" /><span class="thumb" /><span class="right" /></div>
          </div>
        </section>

        <aside class="rightdock">
          <div class="palette order-bar">
            <span class="phead" />
            <div class="pbody">
              <button v-for="o in ['ord1', 'ord2', 'ord3', 'ord4']" :key="o" class="ptool" :aria-label="o">
                <svg viewBox="0 0 16 16" v-html="icons[o]" />
              </button>
            </div>
          </div>
        </aside>
      </main>

      <section class="command">
        <span class="cgrip" />
        <div class="cbody">
          <div class="history">
            <pre>[wireframe2d/wireframe3d/Nascosto3d/Realistico/Concettuale/Altro] &lt;Nascosto3d&gt;:
_C</pre>
            <div class="cscroll"><span class="up" /><span class="down" /></div>
          </div>
          <div class="prompt">
            <label for="cmd">Comando:</label>
            <input id="cmd" v-model="command" type="text" />
            <div class="pscroll"><span class="left" /><span class="thumb" /><span class="right" /></div>
          </div>
        </div>
      </section>

      <footer class="status">
        <span class="coords">-17.8033, -31.5324, 0.0000</span>
        <div class="toggles">
          <button v-for="t in toggles" :key="t[0]" :class="{ on: t[1] }" :aria-pressed="t[1]" :aria-label="t[0]">
            <svg viewBox="0 0 16 16" v-html="icons[t[0]]" />
          </button>
        </div>
        <div class="sgroup">
          <button class="txt">MODELLO</button>
          <button aria-label="Layout"><svg viewBox="0 0 16 16" v-html="icons.lay1" /></button>
          <button aria-label="Layout rapidi"><svg viewBox="0 0 16 16" v-html="icons.lay2" /></button>
        </div>
        <div class="sgroup">
          <button v-for="s in ['pan', 'zoom', 'ruotino', 'film']" :key="s" :aria-label="s"><svg viewBox="0 0 16 16" v-html="icons[s]" /></button>
        </div>
        <div class="sgroup">
          <button class="txt"><svg viewBox="0 0 16 16" v-html="icons.annot" />1:1<i /></button>
          <button aria-label="Visibilità annotazioni"><svg viewBox="0 0 16 16" v-html="icons.annotG" /></button>
          <button aria-label="Scale automatiche"><svg viewBox="0 0 16 16" v-html="icons.annotD" /></button>
        </div>
        <div class="sgroup">
          <button class="txt"><svg viewBox="0 0 16 16" v-html="gear" />Classica di AutoCAD<i /></button>
          <button aria-label="Blocca"><svg viewBox="0 0 16 16" v-html="icons.lucchetto" /></button>
        </div>
        <div class="sgroup">
          <button class="hw" aria-label="Accelerazione hardware"><svg viewBox="0 0 16 16" v-html="icons.hw" /></button>
          <button class="slim" aria-label="Menu barra di stato"><i /></button>
          <button aria-label="Schermo intero"><svg viewBox="0 0 16 16" v-html="icons.pulito" /></button>
        </div>
        <span class="resize" />
      </footer>
    </div>

    <footer class="taskbar">
      <button class="start" aria-label="Start">
        <svg viewBox="0 0 34 28">
          <defs>
            <radialGradient id="orb" cx="0.500" cy="0.850" r="0.900">
              <stop offset="0" stop-color="#3fc4ea" />
              <stop offset="0.500" stop-color="#1d5c94" />
              <stop offset="1" stop-color="#9fb8c8" />
            </radialGradient>
          </defs>
          <circle cx="17" cy="15" r="16" fill="url(#orb)" stroke="#1c3850" />
          <path d="M8 9c3-2 5-2 8 0l-1 6c-3-2-5-2-8 0z" fill="#e5653a" />
          <path d="M17 9c3 2 5 2 9 0l-2 6c-3 2-5 2-8 0z" fill="#8cc650" />
          <path d="M7 16c3-2 5-2 8 0l-1 6c-3-2-5-2-8 0z" fill="#5aa8e8" />
          <path d="M16 16c3 2 5 2 8 0l-2 6c-3 2-5 2-8 0z" fill="#f6cc48" />
        </svg>
      </button>
      <div class="launch">
        <button aria-label="Mostra desktop"><svg viewBox="0 0 16 16" v-html="icons.desktop" /></button>
        <button aria-label="Cambia finestra"><svg viewBox="0 0 16 16" v-html="icons.finestre" /></button>
        <button aria-label="Chrome"><svg viewBox="0 0 16 16" v-html="icons.chrome" /></button>
      </div>
      <button class="task"><svg viewBox="0 0 16 16" v-html="icons.chrome" />Filettatura speciale f...</button>
      <button class="task current"><svg viewBox="0 0 16 16" v-html="icons.acad" />AutoCAD 2010 - [F...</button>
      <div class="tray">
        <span class="lang">IT</span>
        <button aria-label="Mostra icone nascoste"><svg viewBox="0 0 16 16"><path d="M11 3L5 8l6 5" stroke="#fff" stroke-width="2" /></svg></button>
        <button v-for="t in tray" :key="t" :aria-label="t"><svg viewBox="0 0 16 16" v-html="icons[t]" /></button>
        <span class="traygap" />
        <button v-for="t in tray2" :key="t" :aria-label="t"><svg viewBox="0 0 16 16" v-html="icons[t]" /></button>
        <time>21.21</time>
      </div>
    </footer>
  </div>
</template>

<style>
body {
  margin: 0;
  background: #111;
}
</style>

<style scoped>
* {
  box-sizing: border-box;
}
.desktop {
  min-height: 100vh;
  display: flex;
  flex-direction: column;
  font: 9px/12px "Open Sans", "Noto Sans", sans-serif;
  color: #1c1c1c;
  background: linear-gradient(#a9bec6 0, #8d9a9c 60px, #3a3a38 200px, #0c0c0c 420px, #1a1a18 100%);
}
button {
  margin: 0;
  padding: 0;
  border: 0;
  background: none;
  font: inherit;
  color: inherit;
  display: flex;
  align-items: center;
  justify-content: center;
}
svg {
  display: block;
  flex: none;
}
button svg,
.layericon {
  width: 15px;
  height: 15px;
  fill: none;
  stroke: #4c4c4c;
}
.window {
  flex: 1;
  display: flex;
  flex-direction: column;
  margin: 3px 3px 0 4px;
  background: #666;
  border-top: 1px solid #5a6468;
}
.titlebar {
  height: 37px;
  display: flex;
  background: linear-gradient(#8f8b8d, #8a8a8a 12px, #6a6a6a 24px, #565656);
  border-bottom: 1px solid #3c3c3c;
}
.logo {
  width: 33px;
  height: 33px;
  margin: 1px 1px 0 1px;
  background: linear-gradient(#aaa, #6e6e6e);
  border: 1px solid #4a4a4a;
}
.logo svg {
  width: 30px;
  height: 30px;
  stroke: none;
}
.titlemain {
  flex: 1;
  display: flex;
  flex-direction: column;
}
.titleline {
  display: flex;
  align-items: center;
  height: 20px;
}
.quick {
  width: 139px;
  height: 18px;
  display: flex;
  align-items: center;
  border: 1px solid #484848;
  background: linear-gradient(#9a9a9a, #777);
  padding: 0 2px;
}
.quick button {
  flex: 1;
}
.quick button.drop {
  flex: none;
  width: 10px;
}
h1 {
  flex: 1;
  margin: 0;
  display: flex;
  justify-content: center;
  gap: 12px;
  font: 9px/14px "Open Sans", "Noto Sans", sans-serif;
  color: #f6f6f6;
  white-space: nowrap;
}
.searchbox {
  width: 263px;
  height: 18px;
  display: flex;
  align-items: center;
  border: 1px solid #3f3f3f;
  background: linear-gradient(#909090, #6c6c6c);
}
.searchbox .tri {
  border: 3px solid transparent;
  border-left: 4px solid #111;
  border-right: 0;
  margin: 0 3px 0 4px;
}
.searchbox input {
  width: 144px;
  height: 16px;
  border: 0;
  padding: 0 2px;
  background: #f8f8f8;
  font: italic 9px/16px "Open Sans", "Noto Sans", sans-serif;
}
.searchbox input::placeholder {
  color: #777;
}
.searchbox button {
  flex: 1;
}
.tiny {
  border: 2px solid transparent;
  border-top-color: #222;
  border-bottom: 0;
}
.winbtns {
  width: 40px;
  margin: 0 4px 0 13px;
  display: flex;
  justify-content: space-between;
}
.winbtns svg {
  width: 10px;
  height: 10px;
  fill: #f8f8f8;
  stroke: none;
}
.menuline {
  flex: 1;
  display: flex;
  align-items: center;
  justify-content: space-between;
}
nav {
  display: flex;
  gap: 19px;
  padding-left: 10px;
  color: #f6f6f6;
}
.toolbars {
  display: flex;
  flex-direction: column;
  gap: 4px;
  padding: 0 0 2px;
  background: #5e5e5e;
}
.toolrow {
  height: 18px;
  display: flex;
}
.grip {
  width: 8px;
  flex: none;
  border: 1px solid #777;
  border-width: 0 2px 0 1px;
  background: repeating-linear-gradient(#4a4a4a 0 1px, #686868 1px 2px);
}
.light {
  width: 6px;
  flex: none;
  background: #ddd;
  border: 1px solid #777;
  border-width: 0 2px;
}
.bar {
  flex: none;
  display: flex;
  align-items: center;
  background: #efefef;
  border-bottom: 1px solid #bbb;
}
.tool {
  flex: 1;
  min-width: 0;
}
.tool.drop {
  flex: none;
  width: 10px;
}
.drop svg {
  width: 9px;
}
.sep {
  flex: none;
  width: 5px;
  height: 14px;
  border-left: 1px solid #aaa;
  border-right: 4px solid transparent;
}
.combo {
  flex: none;
  display: flex;
  align-items: center;
  position: relative;
  background: linear-gradient(#f8f8f8, #dedede);
  border: 1px solid #8b8b8b;
}
.combo::after {
  content: "";
  position: absolute;
  right: 4px;
  top: 6px;
  border: 3px solid transparent;
  border-top: 4px solid #111;
  border-bottom: 0;
  pointer-events: none;
}
.combo select {
  flex: 1;
  min-width: 0;
  height: 16px;
  appearance: none;
  border: 0;
  background: none;
  font: 9px/16px "Open Sans", "Noto Sans", sans-serif;
  color: #1c1c1c;
  padding: 0 10px 0 3px;
}
.combo.small select {
  padding-left: 6px;
}
.combo.mid select {
  padding-left: 13px;
}
.combo.disabled {
  background: #f4f4f4;
}
.combo.disabled select {
  color: #999;
  opacity: 1;
}
.combo.disabled::after {
  border-top-color: #aaa;
}
.swatch {
  width: 8px;
  height: 8px;
  margin-left: 4px;
  background: #000;
}
.line {
  height: 1px;
  margin: 0 0 0 3px;
  background: #111;
}
.layericon {
  width: 13px;
}
.workspace {
  flex: 1;
  display: flex;
  min-height: 0;
  border-top: 1px solid #555;
}
.docks {
  display: flex;
  gap: 3px;
  padding-left: 1px;
}
.palette {
  width: 19px;
  display: flex;
  flex-direction: column;
}
.phead {
  height: 6px;
  background: repeating-linear-gradient(90deg, #444 0 1px, #666 1px 2px);
}
.pbody {
  display: flex;
  flex-direction: column;
  background: #f1f1f1;
  border: 1px solid #999;
}
.ptool {
  flex: 1;
  min-height: 0;
}
.hsep {
  height: 5px;
  flex: none;
  border-bottom: 2px solid transparent;
  border-top: 1px solid #aaa;
}
.ucs-bar .pbody {
  height: 252px;
}
.solid-bar .pbody {
  height: 331px;
}
.model-bar {
  height: 395px;
  overflow: hidden;
}
.model-bar .phead {
  flex: none;
}
.model-bar .pbody {
  flex: none;
  height: 404px;
}
.drawing {
  flex: 1;
  min-width: 0;
  margin-left: 6px;
  display: flex;
  flex-direction: column;
  border: 1px solid #d8d8d8;
}
.canvasrow {
  flex: 1;
  min-height: 0;
  display: flex;
}
.canvas {
  flex: 1;
  position: relative;
  background: #c2c2c2;
  overflow: hidden;
}
.scene {
  position: absolute;
  inset: 0;
  width: 100%;
  height: 100%;
}
.compass {
  position: absolute;
  top: 2px;
  right: 10px;
  width: 74px;
  display: flex;
  flex-direction: column;
  align-items: center;
  gap: 18px;
}
.compass svg {
  width: 72px;
  height: 70px;
}
.compass button {
  width: 52px;
  height: 13px;
  margin-left: 8px;
  background: #d2d2d2;
  border-radius: 2px;
  color: #909090;
  gap: 4px;
  font: 8px/12px "Liberation Sans", sans-serif;
}
.compass button span {
  font-size: 5px;
}
.dir {
  font: bold 11px "Liberation Sans", sans-serif;
  fill: #8d8d8d;
}
.dir.small {
  font-size: 8px;
}
.face {
  font: bold 6px "Liberation Sans", sans-serif;
  fill: #808080;
}
.face.tiny-face {
  font-size: 4px;
}
.vscroll {
  width: 15px;
  display: flex;
  flex-direction: column;
  align-items: center;
  background: #f1f1f1;
  padding: 5px 0;
}
.up,
.down {
  width: 0;
  border: 3px solid transparent;
}
.up {
  border-bottom: 3px solid #333;
  border-top: 0;
}
.down {
  border-top: 3px solid #333;
  border-bottom: 0;
}
.left,
.right {
  border: 3px solid transparent;
}
.left {
  border-right: 3px solid #333;
  border-left: 0;
}
.right {
  border-left: 3px solid #333;
  border-right: 0;
}
.thumb {
  width: 12px;
  height: 12px;
  background: linear-gradient(#f8f8f8, #ccc);
  border: 1px solid #999;
}
.vscroll .thumb {
  margin: auto 0 130px;
}
.tabs {
  height: 14px;
  display: flex;
  align-items: stretch;
  background: #f0f0f0;
  font: 9px/13px "Liberation Sans", sans-serif;
}
.tabnav {
  display: flex;
}
.tabnav button {
  width: 12px;
  border-right: 1px solid #bbb;
}
.tabnav svg {
  width: 8px;
  height: 8px;
  fill: #777;
  stroke: #777;
}
.slash {
  width: 6px;
  height: 14px;
  fill: none;
  stroke: #333;
}
.tab {
  padding: 0 3px;
}
.tab.active {
  background: #fff;
}
.hscroll {
  display: flex;
  align-items: center;
  width: 318px;
  margin-left: auto;
  padding: 0 17px 0 0;
  border-left: 1px solid #ccc;
}
.hscroll .left {
  margin-left: 5px;
}
.hscroll .thumb {
  margin: 0 auto 0 150px;
}
.rightdock {
  width: 28px;
  padding-left: 4px;
}
.order-bar .pbody {
  height: 73px;
}
.command {
  height: 48px;
  margin: 2px 0 0;
  display: flex;
  font: 11px/13px "Liberation Mono", monospace;
  background: #8e8e8e;
}
.cgrip {
  width: 12px;
  margin-top: 2px;
  border-top: 3px double #444;
}
.cbody {
  flex: 1;
  display: flex;
  flex-direction: column;
  background: #fff;
}
.history {
  height: 32px;
  display: flex;
  border-bottom: 1px solid #999;
}
pre {
  flex: 1;
  margin: 0;
  padding: 1px 3px;
  font: inherit;
}
.cscroll {
  width: 17px;
  display: flex;
  flex-direction: column;
  align-items: center;
  justify-content: space-between;
  padding: 6px 0;
  background: #f1f1f1;
}
.prompt {
  flex: 1;
  display: flex;
  align-items: center;
  padding-left: 3px;
}
.prompt input {
  flex: 1;
  border: 0;
  padding: 0 3px;
  height: 13px;
  font: inherit;
}
.pscroll {
  width: 68px;
  height: 100%;
  display: flex;
  align-items: center;
  justify-content: space-between;
  padding: 0 20px 0 6px;
  background: #f1f1f1;
}
.status {
  height: 19px;
  display: flex;
  align-items: center;
  background: linear-gradient(#9e9e9e, #858585);
  border-top: 1px solid #333;
  font: 9px/14px "Liberation Sans", sans-serif;
  color: #111;
}
.coords {
  width: 143px;
  padding-left: 10px;
}
.toggles {
  width: 177px;
  display: flex;
  margin-right: auto;
}
.toggles button {
  flex: 1;
  height: 17px;
  background: #b4b4b4;
  border: 1px solid #777;
}
.toggles button.on {
  background: linear-gradient(#d9edf2, #9fc8d4);
}
.toggles svg {
  width: 14px;
  height: 14px;
}
.sgroup {
  display: flex;
  margin-left: 7px;
}
.sgroup button {
  width: 17px;
  height: 17px;
  background: #b6b6b6;
  border: 1px solid #808080;
  border-width: 1px 1px 1px 0;
}
.sgroup button.txt {
  width: auto;
  padding: 0 2px;
  gap: 2px;
}
.sgroup button.slim {
  width: 11px;
}
.sgroup button.hw {
  width: 22px;
  background: #9cb2b8;
}
.sgroup svg {
  width: 13px;
  height: 13px;
}
.sgroup i {
  border: 3px solid transparent;
  border-top: 4px solid #111;
  border-bottom: 0;
}
.resize {
  width: 10px;
  height: 10px;
  margin: 0 2px 0 4px;
  background: repeating-linear-gradient(135deg, #999 0 2px, #ddd 2px 3px);
  clip-path: polygon(100% 0, 100% 100%, 0 100%);
}
.taskbar {
  height: 25px;
  display: flex;
  align-items: center;
  border-top: 1px solid #222;
  background: linear-gradient(#6e7472, #3e4241 11px, #141617 12px, #0c0d0e);
  color: #f2f2f2;
  font-size: 9px;
}
.start {
  width: 34px;
  height: 26px;
  margin: 0 10px 0 7px;
}
.start svg {
  width: 34px;
  height: 28px;
  stroke: none;
}
.launch {
  display: flex;
  gap: 5px;
  margin-right: 28px;
}
.launch svg,
.task svg {
  width: 13px;
  height: 13px;
}
.task {
  width: 125px;
  height: 21px;
  margin-right: 3px;
  gap: 3px;
  justify-content: flex-start;
  padding-left: 6px;
  border: 1px solid #555;
  border-radius: 2px;
  background: linear-gradient(#5c605f, #3a3d3d 9px, #1e2021 10px);
  white-space: nowrap;
}
.task.current {
  background: #0c0c0d;
  border-color: #444;
}
.tray {
  margin-left: auto;
  display: flex;
  align-items: center;
  gap: 2px;
  padding-right: 10px;
}
.tray svg {
  width: 12px;
  height: 12px;
}
.lang {
  margin-right: 11px;
}
.traygap {
  width: 8px;
}
.tray time {
  margin-left: 4px;
}
</style>
